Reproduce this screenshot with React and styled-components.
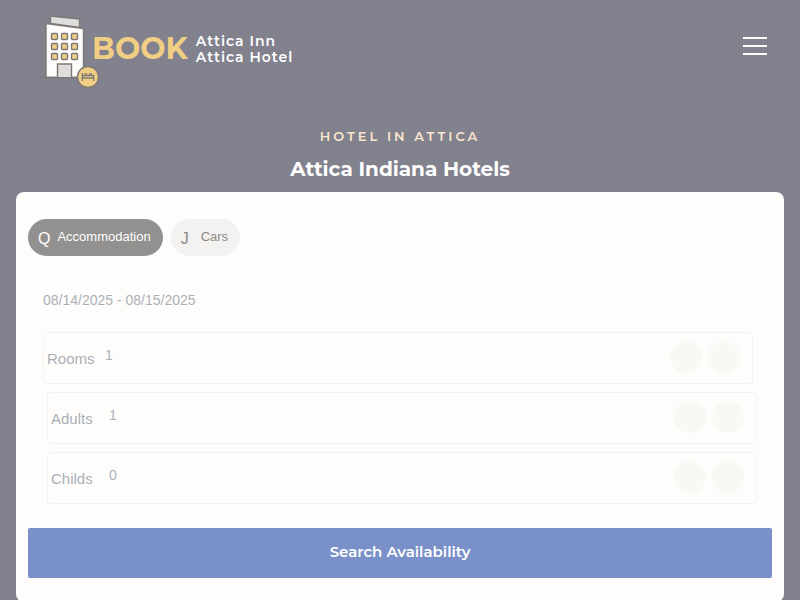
import React, { useState } from 'react'
import styled, { createGlobalStyle } from 'styled-components'

const colors = {
    background: '#82818e',
    card: '#fefdfb',
    gold: '#f0cf85',
    cream: '#fae6cf',
    outline: '#7c7876',
    primary: '#7a90c8',
    muted: '#abb0b8',
    border: '#f3f2f1'
}
const heading = `Montserrat, Inter, sans-serif`

const GlobalStyle = createGlobalStyle`
    * {
        box-sizing: border-box;
    }
    body {
        margin: 0;
        background-color: ${colors.background};
        font-family: "Liberation Sans", Arial, sans-serif;
    }
    button, input {
        font-family: inherit;
    }
`
const Header = styled.header`
    display: flex;
    align-items: center;
    justify-content: space-between;
    height: 96px;
    padding: 0 33px 4px 40px;
`
const Brand = styled.a`
    display: flex;
    align-items: center;
    padding-top: 10px;
    color: #fff;
    font-family: ${heading};
    text-decoration: none;
`
const BrandName = styled.span`
    margin-right: 8px;
    margin-left: -8px;
    padding-bottom: 4px;
    color: ${colors.gold};
    font-size: 30px;
    font-weight: 700;
    line-height: 40px;
`
const BrandLines = styled.span`
    display: flex;
    flex-direction: column;
    padding-bottom: 4px;
    font-size: 14px;
    font-weight: 600;
    letter-spacing: 1px;
    line-height: 16px;
`
const MenuButton = styled.button`
    display: flex;
    flex-direction: column;
    gap: 6px;
    width: 24px;
    padding: 0;
    border: 0;
    background: none;
    cursor: pointer;
`
const MenuBar = styled.span`
    width: 100%;
    height: 2px;
    background-color: #fff;
`
const Intro = styled.div`
    padding: 32px 16px 9px;
    font-family: ${heading};
    text-align: center;
`
const Eyebrow = styled.p`
    margin: 0;
    color: ${colors.cream};
    font-size: 13px;
    font-weight: 600;
    letter-spacing: 3px;
    line-height: 16px;
    text-transform: uppercase;
`
const Title = styled.h1`
    margin: 11px 0 0;
    color: #fff;
    font-size: 20px;
    font-weight: 700;
    line-height: 28px;
`
const Card = styled.main`
    margin: 0 16px;
    padding: 27px 12px 24px;
    border-radius: 8px;
    background-color: ${colors.card};
`
const Tabs = styled.div`
    display: flex;
    gap: 8px;
`
const Tab = styled.button`
    display: flex;
    align-items: center;
    gap: ${props => props.$gap};
    height: 37px;
    padding: 0 12px 2px 10px;
    border: 0;
    border-radius: 19px;
    background-color: ${props => props.$active ? '#92918f' : '#f3f2f1'};
    color: ${props => props.$active ? '#fff' : '#8b8987'};
    font-size: 13px;
    cursor: pointer;
`
const TabGlyph = styled.span`
    padding-top: 5px;
    font-size: 16px;
`
const DateInput = styled.input`
    display: block;
    width: 100%;
    height: 40px;
    margin-top: 24px;
    padding: 0 15px;
    border: 0;
    background: none;
    color: ${colors.muted};
    font-size: 14px;
    outline: none;
`
const Counters = styled.div`
    display: flex;
    flex-direction: column;
    gap: 8px;
    margin-top: 12px;
`
const Counter = styled.div`
    display: flex;
    align-items: center;
    height: 52px;
    margin: ${props => props.$inset ? '0 15px 0 19px' : '0 19px 0 15px'};
    padding: 0 12px 2px 3px;
    border: 1px solid ${colors.border};
    border-radius: 4px;
    color: ${colors.muted};
    font-size: 15px;
`
const CounterLabel = styled.label`
    width: 58px;
    padding-top: 2px;
`
const CounterValue = styled.input`
    flex: 1;
    min-width: 0;
    height: 20px;
    margin-bottom: 4px;
    padding: 0;
    border: 0;
    background: none;
    color: inherit;
    font-size: 14px;
    outline: none;
`
const RoundButton = styled.button`
    width: 32px;
    height: 32px;
    margin-left: 6px;
    padding: 0;
    border: 0;
    border-radius: 50%;
    background-color: #f9f8f5;
    cursor: pointer;
`
const SearchButton = styled.button`
    display: block;
    width: 100%;
    height: 50px;
    margin-top: 24px;
    padding: 0 0 3px;
    border: 0;
    border-radius: 2px;
    background-color: ${colors.primary};
    color: #fff;
    font-family: ${heading};
    font-size: 15px;
    font-weight: 600;
    cursor: pointer;
`

const HotelLogo = () => (
    <svg width="60" height="76" viewBox="0 0 60 76" fill="none" stroke={colors.outline} strokeWidth="1.4" aria-hidden="true">
        <path d="M10.5 3 L39.5 6 V14.5 L10.5 10.5 Z" fill="#dfdedd" />
        <path d="M6 10.5 L43.5 15.5 V64.5 H6 Z" fill={colors.card} />
        <path d="M0 64.5 H40" />
        {[20.5, 30.5, 40.5].map(y => [11.5, 21.5, 31.5].map(x => (
            <rect key={`${x}-${y}`} x={x} y={y} width="6" height="6" rx="1" fill={colors.gold} />
        )))}
        <path d="M17.5 64 V51 H31.5 V64" fill="#dfdedd" />
        <circle cx="48" cy="64" r="10.5" fill={colors.gold} />
        <path d="M42.3 60 V68 M42.3 65 H53.7 M53.7 68 V62.5 H42.3 M44.5 60.8 H47 M49 60.8 H52" strokeWidth="1.3" />
    </svg>
)

const counters = [
    { id: 'rooms', label: 'Rooms', start: 1 },
    { id: 'adults', label: 'Adults', start: 1, inset: true },
    { id: 'childs', label: 'Childs', start: 0, inset: true }
]

const CounterRow = ({ id, label, start, inset }) => {
    const [value, setValue] = useState(start)

    return (
        <Counter $inset={inset}>
            <CounterLabel htmlFor={id}>{label}</CounterLabel>
            <CounterValue id={id} value={value} readOnly />
            <RoundButton type="button" aria-label={`Fewer ${label}`} onClick={() => setValue(Math.max(0, value - 1))} />
            <RoundButton type="button" aria-label={`More ${label}`} onClick={() => setValue(value + 1)} />
        </Counter>
    )
}

export default function App() {
    const [tab, setTab] = useState('rooms')
    const [dates, setDates] = useState('08/14/2025 - 08/15/2025')

    return (
        <>
            <GlobalStyle />
            <Header>
                <Brand href="/">
                    <HotelLogo />
                    <BrandName>BOOK</BrandName>
                    <BrandLines>
                        <span>Attica Inn</span>
                        <span>Attica Hotel</span>
                    </BrandLines>
                </Brand>
                <MenuButton type="button" aria-label="Menu">
                    <MenuBar />
                    <MenuBar />
                    <MenuBar />
                </MenuButton>
            </Header>
            <Intro>
                <Eyebrow>Hotel in Attica</Eyebrow>
                <Title>Attica Indiana Hotels</Title>
            </Intro>
            <Card>
                <Tabs>
                    <Tab type="button" $gap="7px" $active={tab === 'rooms'} onClick={() => setTab('rooms')}>
                        <TabGlyph aria-hidden="true">Q</TabGlyph>
                        Accommodation
                    </Tab>
                    <Tab type="button" $gap="12px" $active={tab === 'cars'} onClick={() => setTab('cars')}>
                        <TabGlyph aria-hidden="true">J</TabGlyph>
                        Cars
                    </Tab>
                </Tabs>
                <DateInput aria-label="Dates" value={dates} onChange={e => setDates(e.target.value)} />
                <Counters>
                    {counters.map(item => <CounterRow key={item.id} {...item} />)}
                </Counters>
                <SearchButton type="button">Search Availability</SearchButton>
            </Card>
        </>
    )
}
